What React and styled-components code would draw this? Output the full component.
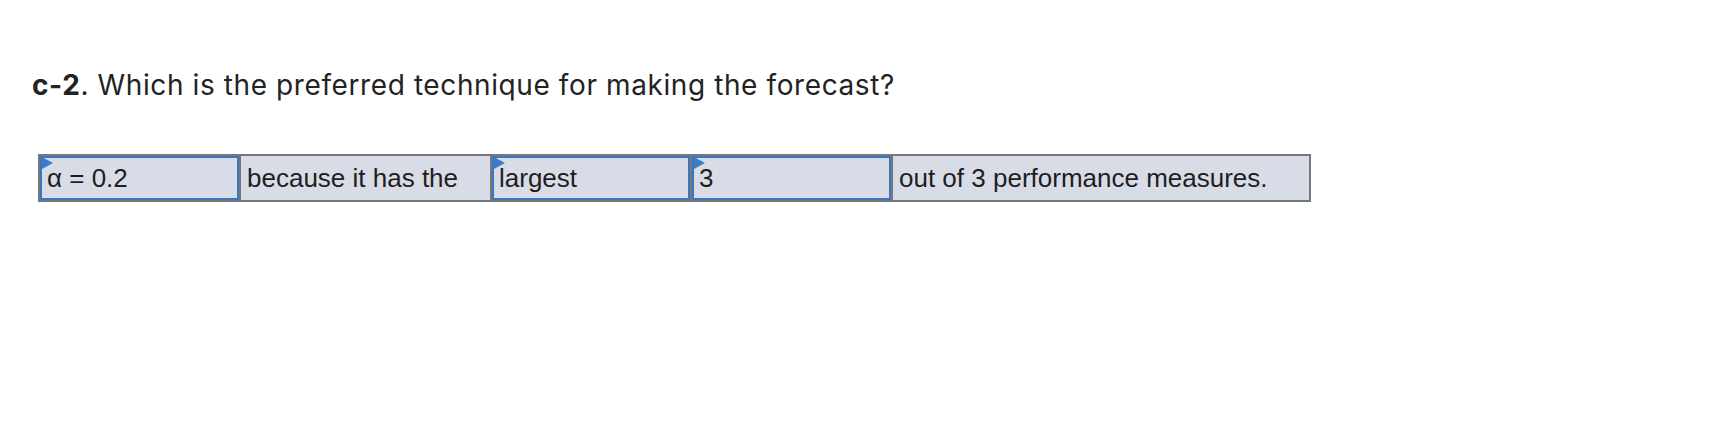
import React from 'react';
import styled, { createGlobalStyle } from 'styled-components';

const GlobalStyle = createGlobalStyle`
  body {
    margin: 0;
    background: #fff;
    color: #222;
  }
`;

const Page = styled('div')`
  padding: 67px 0 0 32px;
`;

const Question = styled('p')`
  margin: 0 0 51px 0;
  font-family: Inter, Lato, sans-serif;
  font-size: 28px;
  letter-spacing: 0.6px;
  line-height: 36px;
  color: #232323;

  strong {
    font-weight: 700;
  }
`;

const AnswerRow = styled('div')`
  display: flex;
  width: 1273px;
  margin-left: 6px;
  border: 2px solid #77787b;
  background: #77787b;
  gap: 2px;
  box-sizing: border-box;
  font-family: "Liberation Sans", Arial, sans-serif;
  font-size: 26px;
  color: #1e1e1e;
`;

const Cell = styled('div')`
  position: relative;
  box-sizing: border-box;
  height: 44px;
  width: ${props => (props.width ? `${props.width}px` : 'auto')};
  flex: ${props => (props.width ? 'none' : 1)};
  display: flex;
  align-items: center;
  padding-left: ${props => (props.select ? '5px' : '6px')};
  background: #d8dce6;
  border: ${props => (props.select ? '2px solid #3b76bf' : 'none')};
  white-space: nowrap;
`;

const Marker = styled('span')`
  position: absolute;
  top: 0;
  left: 0;
  width: 0;
  height: 0;
  border-top: 6px solid transparent;
  border-bottom: 6px solid transparent;
  border-left: 11px solid #3b7bc8;
  margin-top: -1px;
`;

const cells = [
  { text: 'α = 0.2', width: 199, select: true },
  { text: 'because it has the', width: 249 },
  { text: 'largest', width: 198, select: true },
  { text: '3', width: 199, select: true },
  { text: 'out of 3 performance measures.' },
];

const App = () => (
  <Page>
    <GlobalStyle />
    <Question>
      <strong>c-2</strong>. Which is the preferred technique for making the forecast?
    </Question>
    <AnswerRow>
      {cells.map(cell => (
        <Cell key={cell.text} width={cell.width} select={cell.select}>
          {cell.select && <Marker />}
          {cell.text}
        </Cell>
      ))}
    </AnswerRow>
  </Page>
);

export default App;
